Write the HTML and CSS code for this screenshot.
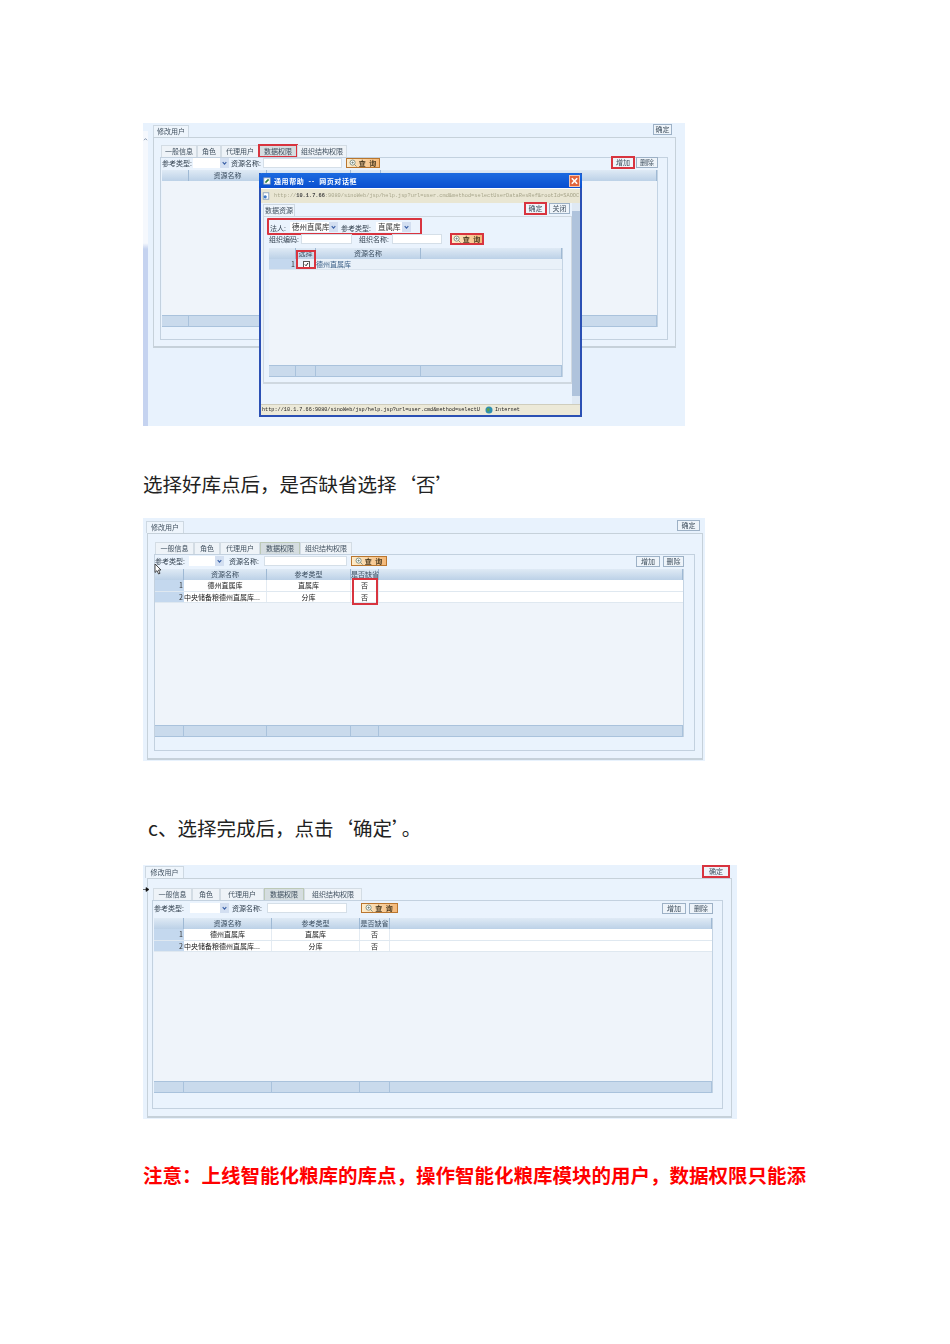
FILE: index.html
```html
<!DOCTYPE html>
<html lang="zh-CN">
<head>
<meta charset="utf-8">
<title>修改用户 数据权限</title>
<link rel="stylesheet" href="styles.css">
</head>
<body>
<svg class="defs" width="0" height="0">
  <symbol id="arrow" viewBox="0 0 10 10"><path d="M3 4 5 6.2 7 4" fill="none" stroke="#3d63a8" stroke-width="1.3"/></symbol>
  <symbol id="lens" viewBox="0 0 10 10"><circle cx="4.5" cy="4.5" r="3.2" fill="#fff" stroke="#6a7f70"/><path d="M7 7 9.5 9.5M3 4.5h3M4.5 3v3" stroke="#6a7f70"/></symbol>
</svg>

<main class="page">
  <!-- first picture: add dialog over the form -->
  <section class="shot shot-a">
    <div class="side-strip">
      <svg class="strip-arrow" viewBox="0 0 5 5"><path d="M1 3.2 2.5 1.6 4 3.2" fill="none" stroke="#6b7f99" stroke-width=".8"/></svg>
    </div>
    <div class="shot-head">
      <span class="head-tab">修改用户</span>
      <span class="btn">确定</span>
    </div>
    <div class="panel">
      <div class="tabs">
        <span class="tab t1">一般信息</span>
        <span class="tab t2">角色</span>
        <span class="tab t3">代理用户</span>
        <span class="tab t4 active marked">数据权限</span>
        <span class="tab t5">组织结构权限</span>
      </div>
      <div class="inner">
        <div class="toolbar">
          <span class="label type-label">参考类型:</span>
          <span class="select type-select"><svg class="arrow"><use href="#arrow"/></svg></span>
          <span class="label name-label">资源名称:</span>
          <span class="input name-input"></span>
          <span class="query name-query"><svg class="lens"><use href="#lens"/></svg>查 询</span>
          <span class="btn add marked">增加</span>
          <span class="btn del">删除</span>
        </div>
        <div class="grid">
          <div class="grid-row grid-header"><span></span><span>资源名称</span><span></span><span></span><span></span></div>
          <div class="grid-body"></div>
          <div class="grid-row grid-footer"><span></span><span></span><span></span><span></span><span></span></div>
        </div>
      </div>
    </div>

    <div class="dialog">
      <div class="dlg-title">
        <svg class="dlg-icon" viewBox="0 0 10 10"><rect x="1" y="1" width="8" height="8" fill="#fff" stroke="#7c97b8"/><path d="M3 7 7 3" stroke="#2f7d3a" stroke-width="2"/></svg>
        <span class="dlg-name">通用帮助 -- 网页对话框</span>
        <span class="dlg-close"><svg viewBox="0 0 10 10"><path d="M2 2 8 8M8 2 2 8" stroke="#fff" stroke-width="1.8"/></svg></span>
      </div>
      <div class="dlg-address">
        <svg class="dlg-icon" viewBox="0 0 10 10"><rect x="1.5" y="1" width="7" height="8" fill="#fff" stroke="#7c97b8"/><circle cx="4" cy="6" r="2" fill="#3a78c8"/></svg>
        <span>http://<b>10.1.7.66</b>:9080/sinoWeb/jsp/help.jsp?url=user.cmd&amp;method=selectUserDataResRef&amp;rootId=SAOOC</span>
      </div>
      <div class="dlg-body">
        <div class="dlg-main">
          <div class="dlg-head">
            <span class="head-tab">数据资源</span>
            <span class="btn dlg-ok marked">确定</span>
            <span class="btn dlg-off">关闭</span>
          </div>
          <div class="dlg-panel">
            <div class="dlg-row1">
              <span class="label law-label">法人:</span>
              <span class="select law-select">德州直属库<svg class="arrow"><use href="#arrow"/></svg></span>
              <span class="label kind-label">参考类型:</span>
              <span class="select kind-select">直属库<svg class="arrow"><use href="#arrow"/></svg></span>
            </div>
            <div class="dlg-row2">
              <span class="label code-label">组织编码:</span>
              <span class="input code-input"></span>
              <span class="label org-label">组织名称:</span>
              <span class="input org-input"></span>
              <span class="query org-query marked"><svg class="lens"><use href="#lens"/></svg>查 询</span>
            </div>
            <div class="grid dlg-grid">
              <div class="grid-row grid-header"><span></span><span>选择</span><span>资源名称</span><span></span></div>
              <div class="grid-row dlg-data"><span class="row-no">1</span><span class="check-cell"><span class="check"><svg viewBox="0 0 8 8"><path d="M1.5 4 3.3 6 6.5 1.5" fill="none" stroke="#111" stroke-width="1.5"/></svg></span></span><span class="res-name">德州直属库</span><span></span></div>
              <div class="grid-body"></div>
              <div class="grid-row grid-footer"><span></span><span></span><span></span><span></span></div>
            </div>
          </div>
        </div>
        <div class="dlg-scroll"><span class="scroll-btn"></span><span class="scroll-btn"></span></div>
      </div>
      <div class="dlg-status">
        <span class="status-url">http://10.1.7.66:9080/sinoWeb/jsp/help.jsp?url=user.cmd&amp;method=selectU</span>
        <svg class="globe" viewBox="0 0 10 10"><circle cx="5" cy="5" r="4.4" fill="#2f8fb0"/><path d="M2 3.5 5 2.5 6 5 3.5 7.5Z" fill="#5aa04a"/></svg>
        <span>Internet</span>
      </div>
      <i class="mark mark-check"></i>
    </div>
  </section>

  <p class="text first">选择好库点后，是否缺省选择‘否’</p>

  <section class="shot shot-b">
    <div class="shot-head">
      <span class="head-tab">修改用户</span>
      <span class="btn">确定</span>
    </div>
    <div class="panel">
      <div class="tabs">
        <span class="tab t1">一般信息</span>
        <span class="tab t2">角色</span>
        <span class="tab t3">代理用户</span>
        <span class="tab t4 active">数据权限</span>
        <span class="tab t5">组织结构权限</span>
      </div>
      <div class="inner">
        <div class="toolbar">
          <span class="label type-label">参考类型:</span>
          <span class="select type-select"><svg class="arrow"><use href="#arrow"/></svg></span>
          <span class="label name-label">资源名称:</span>
          <span class="input name-input"></span>
          <span class="query name-query"><svg class="lens"><use href="#lens"/></svg>查 询</span>
          <span class="btn add">增加</span>
          <span class="btn del">删除</span>
        </div>
        <div class="grid">
          <div class="grid-row grid-header"><span></span><span>资源名称</span><span>参考类型</span><span>是否缺省</span><span></span></div>
          <div class="grid-row grid-data"><span class="row-no">1</span><span>德州直属库</span><span>直属库</span><span>否</span><span></span></div>
          <div class="grid-row grid-data"><span class="row-no">2</span><span class="clip">中央储备粮德州直属库...</span><span>分库</span><span>否</span><span></span></div>
          <div class="grid-body"></div>
          <div class="grid-row grid-footer"><span></span><span></span><span></span><span></span><span></span></div>
        </div>
      </div>
    </div>
    <i class="mark mark-default"></i>
    <svg class="cursor" viewBox="0 0 8 12"><path d="M1 1V9.5L3 7.6 4.6 11 6 10.3 4.5 7H7Z" fill="#fff" stroke="#222" stroke-width=".8"/></svg>
  </section>

  <p class="text second">c、选择完成后，点击‘确定’。</p>

  <section class="shot shot-c">
    <div class="shot-head">
      <span class="head-tab">修改用户</span>
      <span class="btn marked">确定</span>
    </div>
    <div class="panel">
      <div class="tabs">
        <span class="tab t1">一般信息</span>
        <span class="tab t2">角色</span>
        <span class="tab t3">代理用户</span>
        <span class="tab t4 active">数据权限</span>
        <span class="tab t5">组织结构权限</span>
      </div>
      <div class="inner">
        <div class="toolbar">
          <span class="label type-label">参考类型:</span>
          <span class="select type-select"><svg class="arrow"><use href="#arrow"/></svg></span>
          <span class="label name-label">资源名称:</span>
          <span class="input name-input"></span>
          <span class="query name-query"><svg class="lens"><use href="#lens"/></svg>查 询</span>
          <span class="btn add">增加</span>
          <span class="btn del">删除</span>
        </div>
        <div class="grid">
          <div class="grid-row grid-header"><span></span><span>资源名称</span><span>参考类型</span><span>是否缺省</span><span></span></div>
          <div class="grid-row grid-data"><span class="row-no">1</span><span>德州直属库</span><span>直属库</span><span>否</span><span></span></div>
          <div class="grid-row grid-data"><span class="row-no">2</span><span class="clip">中央储备粮德州直属库...</span><span>分库</span><span>否</span><span></span></div>
          <div class="grid-body"></div>
          <div class="grid-row grid-footer"><span></span><span></span><span></span><span></span><span></span></div>
        </div>
      </div>
    </div>
    <svg class="pointer" viewBox="0 0 7 7"><path d="M0 3.5H4M3 1.5 6 3.5 3 5.5Z" fill="#111" stroke="#111" stroke-width=".6"/></svg>
  </section>

  <p class="text notice">注意：上线智能化粮库的库点，操作智能化粮库模块的用户，数据权限只能添</p>
</main>
</body>
</html>
```

FILE: styles.css
```css
body {
  margin: 0;
  background: #fff;
  font-family: "Noto Sans CJK SC", "Liberation Sans", sans-serif;
}

.defs {
  position: absolute;
}

.page {
  width: 950px;
  height: 1344px;
  box-sizing: border-box;
  padding: 123px 0 0 143px;
  overflow: hidden;
}

/* body copy */
.text {
  margin: 0;
  height: 30px;
  font-size: 19.5px;
  line-height: 30px;
  color: #222;
  white-space: nowrap;
}

.first { margin: 43px 0 19px; }
.second { margin: 52px 0 22px; padding-left: 5px; }
.notice { margin-top: 41px; color: #f00; font-weight: 700; }

/* screenshots */
.shot {
  position: relative;
  display: flex;
  flex-direction: column;
  box-sizing: border-box;
  background: #e8f2fd;
  color: #40505f;
  font-size: 7px;
  line-height: 10px;
  filter: blur(.4px);
}

.shot-a {
  width: 542px;
  height: 303px;
  padding: 0 9px 78px 10px;
  --head-h: 14px;
  --head-pad: 0 4px 0 0;
  --head-tab-w: 36px;
  --head-tab-left: 0;
  --ok-w: 19px;
  --ok-bottom: 2px;
  --tabs-pad: 7px 7px 0 7px;
  --panel-pad: 6px;
  --inner-pad: 0 9px 12px 1px;
  --bar-top: -1px;
  --bar-h: 11px;
  --grid-gap: 2px;
  --cols: 27px 78px 84px 30px 1fr;
  --l1: 30px;
  --s-gap: 1px;
  --s-w: 36px;
  --l2-gap: 2px;
  --l2: 31px;
  --i-gap: 1px;
  --i-w: 79px;
  --q-gap: 4px;
  --q-w: 34px;
  --b1: 22px;
  --b2: 22px;
  --b-gap: 2px;
}

.shot-b {
  width: 562px;
  height: 243px;
  padding: 0 2px 1px 4px;
  --head-h: 15px;
  --head-pad: 0 3px 0 0;
  --head-tab-w: 38px;
  --head-tab-left: -1px;
  --ok-w: 23px;
  --ok-bottom: 2px;
  --tabs-pad: 8px 7px 0 7px;
  --panel-pad: 7px;
  --inner-pad: 0 10px 13px 0;
  --bar-top: 0;
  --bar-h: 12px;
  --grid-gap: 2px;
  --cols: 29px 83px 84px 28px 1fr;
  --l1: 32px;
  --s-gap: 2px;
  --s-w: 35px;
  --l2-gap: 5px;
  --l2: 31px;
  --i-gap: 4px;
  --i-w: 83px;
  --q-gap: 4px;
  --q-w: 36px;
  --b1: 24px;
  --b2: 21px;
  --b-gap: 3px;
}

.shot-c {
  width: 594px;
  height: 254px;
  padding: 0 5px 1px 4px;
  --head-h: 13px;
  --head-pad: 0 3px 0 0;
  --head-tab-w: 39px;
  --head-tab-left: -2px;
  --ok-w: 26px;
  --ok-bottom: 1px;
  --tabs-pad: 9px 8px 0 5px;
  --panel-pad: 7px;
  --inner-pad: 0 9px 15px 1px;
  --bar-top: 0;
  --bar-h: 14px;
  --grid-gap: 3px;
  --cols: 30px 88px 88px 30px 1fr;
  --l1: 33px;
  --s-gap: 3px;
  --s-w: 39px;
  --l2-gap: 3px;
  --l2: 32px;
  --i-gap: 3px;
  --i-w: 80px;
  --q-gap: 14px;
  --q-w: 37px;
  --b1: 24px;
  --b2: 24px;
  --b-gap: 3px;
}

.shot-head {
  display: flex;
  justify-content: space-between;
  align-items: flex-end;
  height: var(--head-h);
  padding: var(--head-pad);
  flex: none;
}

.head-tab {
  width: var(--head-tab-w);
  height: 12px;
  margin-left: var(--head-tab-left);
  border: 1px solid #cdd8e2;
  border-bottom: 0;
  box-sizing: border-box;
  background: #eef5fc;
  line-height: 11px;
  text-align: center;
  white-space: nowrap;
  flex: none;
}

.btn {
  width: 19px;
  height: 11px;
  box-sizing: border-box;
  margin-bottom: 2px;
  border: 1px solid #9db1c6;
  background: #eef4fa;
  line-height: 9px;
  text-align: center;
  white-space: nowrap;
  flex: none;
}

.shot-head .btn {
  width: var(--ok-w);
  margin-bottom: var(--ok-bottom);
}

.marked {
  outline: 2px solid #d8343f;
  outline-offset: -1px;
}

.panel {
  flex: 1;
  min-height: 0;
  display: flex;
  flex-direction: column;
  box-sizing: border-box;
  border: 1px solid #c6d1da;
  border-bottom-width: 2px;
  padding: var(--tabs-pad);
  padding-bottom: var(--panel-pad);
  background: #eaf3fd;
}

.tabs {
  display: flex;
  flex: none;
  height: 12px;
}

.tab {
  box-sizing: border-box;
  border: 1px solid #d3dce4;
  border-bottom: 0;
  background: #eef3f8;
  text-align: center;
  line-height: 11px;
  white-space: nowrap;
}

.tab.active { background: #d5dde0; border-color: #bcc9b8; }

.shot-a .t1 { width: 36px; }
.shot-a .t2 { width: 24px; }
.shot-a .t3 { width: 38px; }
.shot-a .t4 { width: 38px; }
.shot-a .t5 { width: 50px; }

.shot-b .t1 { width: 39px; }
.shot-b .t2 { width: 26px; }
.shot-b .t3 { width: 40px; }
.shot-b .t4 { width: 40px; }
.shot-b .t5 { width: 52px; }

.shot-c .t1 { width: 39px; }
.shot-c .t2 { width: 28px; }
.shot-c .t3 { width: 44px; }
.shot-c .t4 { width: 40px; }
.shot-c .t5 { width: 58px; }

.inner {
  flex: 1;
  min-height: 0;
  display: flex;
  flex-direction: column;
  margin-left: -1px;
  border: 1px solid #c3d1df;
  padding: var(--inner-pad);
}

.toolbar {
  display: flex;
  align-items: center;
  height: var(--bar-h);
  margin-top: var(--bar-top);
  flex: none;
}

.label {
  color: #33414f;
  white-space: nowrap;
  flex: none;
}

.type-label { width: var(--l1); }
.type-select { margin-left: var(--s-gap); width: var(--s-w); }
.name-label { margin-left: var(--l2-gap); width: var(--l2); }
.name-input { margin-left: var(--i-gap); width: var(--i-w); }
.name-query { margin-left: var(--q-gap); width: var(--q-w); }

.toolbar .btn { margin-bottom: 0; }
.toolbar .add { margin-left: auto; width: var(--b1); }
.toolbar .del { margin-left: var(--b-gap); width: var(--b2); }

.select {
  position: relative;
  height: 10px;
  box-sizing: border-box;
  background: #fff;
  padding-left: 2px;
  line-height: 10px;
  white-space: nowrap;
  color: #333;
  flex: none;
}

.arrow {
  position: absolute;
  right: 0;
  top: 0;
  width: 9px;
  height: 10px;
  background: #d3dff1;
}

.input {
  height: 10px;
  box-sizing: border-box;
  border: 1px solid #d5dfe8;
  background: #fff;
  flex: none;
}

.query {
  display: flex;
  align-items: center;
  justify-content: center;
  gap: 2px;
  height: 10px;
  box-sizing: border-box;
  border: 1px solid #b9762f;
  background: linear-gradient(90deg, #fdeccb, #f4b878);
  color: #4a3a20;
  font-weight: 700;
  letter-spacing: 1px;
  white-space: nowrap;
  flex: none;
}

.lens {
  width: 8px;
  height: 8px;
}

/* data grid */
.grid {
  flex: 1;
  min-height: 0;
  display: flex;
  flex-direction: column;
  margin-top: var(--grid-gap);
  background: #eff4fa;
  border-right: 1px solid #c3d3e3;
}

.grid-row {
  display: grid;
  grid-template-columns: var(--cols);
  flex: none;
}

.grid-row > span {
  text-align: center;
  white-space: nowrap;
}

.grid-header {
  height: 11px;
  background: linear-gradient(#dfeaf5, #bcd1e7);
  color: #3c4e60;
}

.grid-header > span { border-right: 1px solid #9fb9d4; }

.grid-data {
  height: 11.5px;
  box-sizing: border-box;
  background: #fff;
  border-bottom: 1px solid #dfe8f0;
  color: #222;
}

.grid-data > span:nth-child(n+2):nth-child(-n+4) { border-right: 1px solid #e4ebf2; }

.row-no {
  background: #c4d8ee;
  color: #333;
  text-align: right !important;
  padding-right: 1px;
}

.grid-row > .clip {
  text-align: left;
}

.grid-body { flex: 1; min-height: 0; }

.grid-footer {
  height: 12px;
  box-sizing: border-box;
  background: #c9daec;
  border-top: 1px solid #a9c2dc;
  border-bottom: 1px solid #a9c2dc;
}

.grid-footer > span { border-right: 1px solid #a9c2dc; }

/* dialog over the first picture */
.dialog {
  position: absolute;
  left: 116px;
  top: 50px;
  width: 323px;
  height: 244px;
  display: flex;
  flex-direction: column;
  box-sizing: border-box;
  border: 2px solid #2b50b4;
  border-top: 0;
  background: #eaf3fd;
  --cols: 27px 20px 105px 1fr;
  --head-tab-w: 32px;
  --head-tab-left: 0;
  --grid-gap: 3px;
}

.dlg-title {
  display: flex;
  align-items: center;
  gap: 3px;
  height: 15px;
  margin: 0 -2px;
  padding: 0 2px 0 4px;
  background: linear-gradient(#1b6ae0, #0a4fd0);
  border-radius: 3px 3px 0 0;
  color: #fff;
  font-weight: 700;
  flex: none;
}

.dlg-name {
  letter-spacing: .6px;
  word-spacing: 2px;
  white-space: nowrap;
}

.dlg-icon {
  width: 8px;
  height: 8px;
  flex: none;
}

.dlg-close {
  margin-left: auto;
  width: 11px;
  height: 12px;
  background: #e2643c;
  border: 1px solid #f5c4b0;
  box-sizing: border-box;
}

.dlg-close svg {
  display: block;
  width: 100%;
  height: 100%;
}

.dlg-address {
  display: flex;
  align-items: center;
  gap: 4px;
  height: 14px;
  padding: 0 0 0 1px;
  border-top: 1px solid #fff;
  background: #e9e6d3;
  color: #a8a68c;
  font-family: "Liberation Mono", monospace;
  font-size: 5.3px;
  white-space: nowrap;
  overflow: hidden;
  flex: none;
}

.dlg-address b { color: #444; }

.dlg-body {
  flex: 1;
  min-height: 0;
  display: flex;
}

.dlg-main {
  flex: 1;
  min-width: 0;
  padding-left: 2px;
}

.dlg-head {
  display: flex;
  align-items: flex-end;
  height: 13px;
}

.dlg-ok { margin-left: auto; width: 21px; }
.dlg-off { margin: 0 2px 2px 3px; width: 21px; }

.dlg-panel {
  display: flex;
  flex-direction: column;
  box-sizing: border-box;
  height: 168px;
  border: 1px solid #cfd8e0;
  border-bottom-width: 2px;
  padding: 1px 8px 5px 5px;
}

.dlg-row1 {
  display: flex;
  align-items: flex-end;
  box-sizing: border-box;
  width: 155px;
  height: 17px;
  margin: 0 0 -3px -2px;
  border: 2px solid #d8343f;
  border-radius: 1px;
  padding: 0 0 1px 1px;
  flex: none;
}

.law-label { width: 20px; line-height: 8px; }
.law-select { width: 48px; font-size: 7.5px; }
.kind-label { width: 31px; margin-left: 3px; line-height: 8px; }
.kind-select { width: 35px; margin-left: 4px; font-size: 7.5px; }

.dlg-row2 {
  display: flex;
  align-items: center;
  height: 13px;
  flex: none;
}

.code-label { width: 31px; }
.code-input { width: 51px; margin-left: 1px; }
.org-label { width: 31px; margin-left: 7px; }
.org-input { width: 50px; margin-left: 2px; }
.org-query { width: 32px; margin-left: 9px; }

.dlg-data {
  height: 10px;
  background: #e9f1f9;
  border-bottom: 1px solid #dbe5ef;
}

.check-cell {
  display: flex;
  align-items: center;
  justify-content: center;
}

.check {
  width: 7px;
  height: 7px;
  background: #fff;
  border: 1px solid #555;
  box-sizing: border-box;
}

.check svg {
  display: block;
  width: 100%;
  height: 100%;
}

.grid-row > .res-name {
  text-align: left;
  color: #3a5f86;
}

.dlg-scroll {
  display: flex;
  flex-direction: column;
  justify-content: space-between;
  width: 8px;
  background: #afc3dc;
  flex: none;
}

.scroll-btn {
  height: 8px;
  background: #dfe9f4;
}

.dlg-status {
  display: flex;
  align-items: center;
  gap: 2px;
  height: 10px;
  padding-left: 1px;
  background: #ece9d8;
  border-top: 1px solid #cfcdbd;
  color: #222;
  font-family: "Liberation Mono", monospace;
  font-size: 5.2px;
  white-space: nowrap;
  flex: none;
}

.status-url {
  width: 221px;
  flex: none;
}

.globe {
  width: 8px;
  height: 8px;
  flex: none;
}

/* overlays */
.mark {
  position: absolute;
  box-sizing: border-box;
  border: 2px solid #d8343f;
}

.mark-check {
  left: 35px;
  top: 77px;
  width: 20px;
  height: 19px;
}

.mark-default {
  left: 209px;
  top: 60px;
  width: 26px;
  height: 27px;
}

.cursor {
  position: absolute;
  left: 11px;
  top: 45px;
  width: 8px;
  height: 12px;
}

.pointer {
  position: absolute;
  left: 0;
  top: 21px;
  width: 7px;
  height: 7px;
}

.side-strip {
  position: absolute;
  left: 0;
  top: 8px;
  bottom: 0;
  width: 5px;
  background: linear-gradient(#f5f8fd 0, #f5f8fd 38%, #c5d3f0 40%, #c5d3f0 100%);
}

.strip-arrow {
  display: block;
  width: 5px;
  height: 5px;
  margin-top: 6px;
}
```
